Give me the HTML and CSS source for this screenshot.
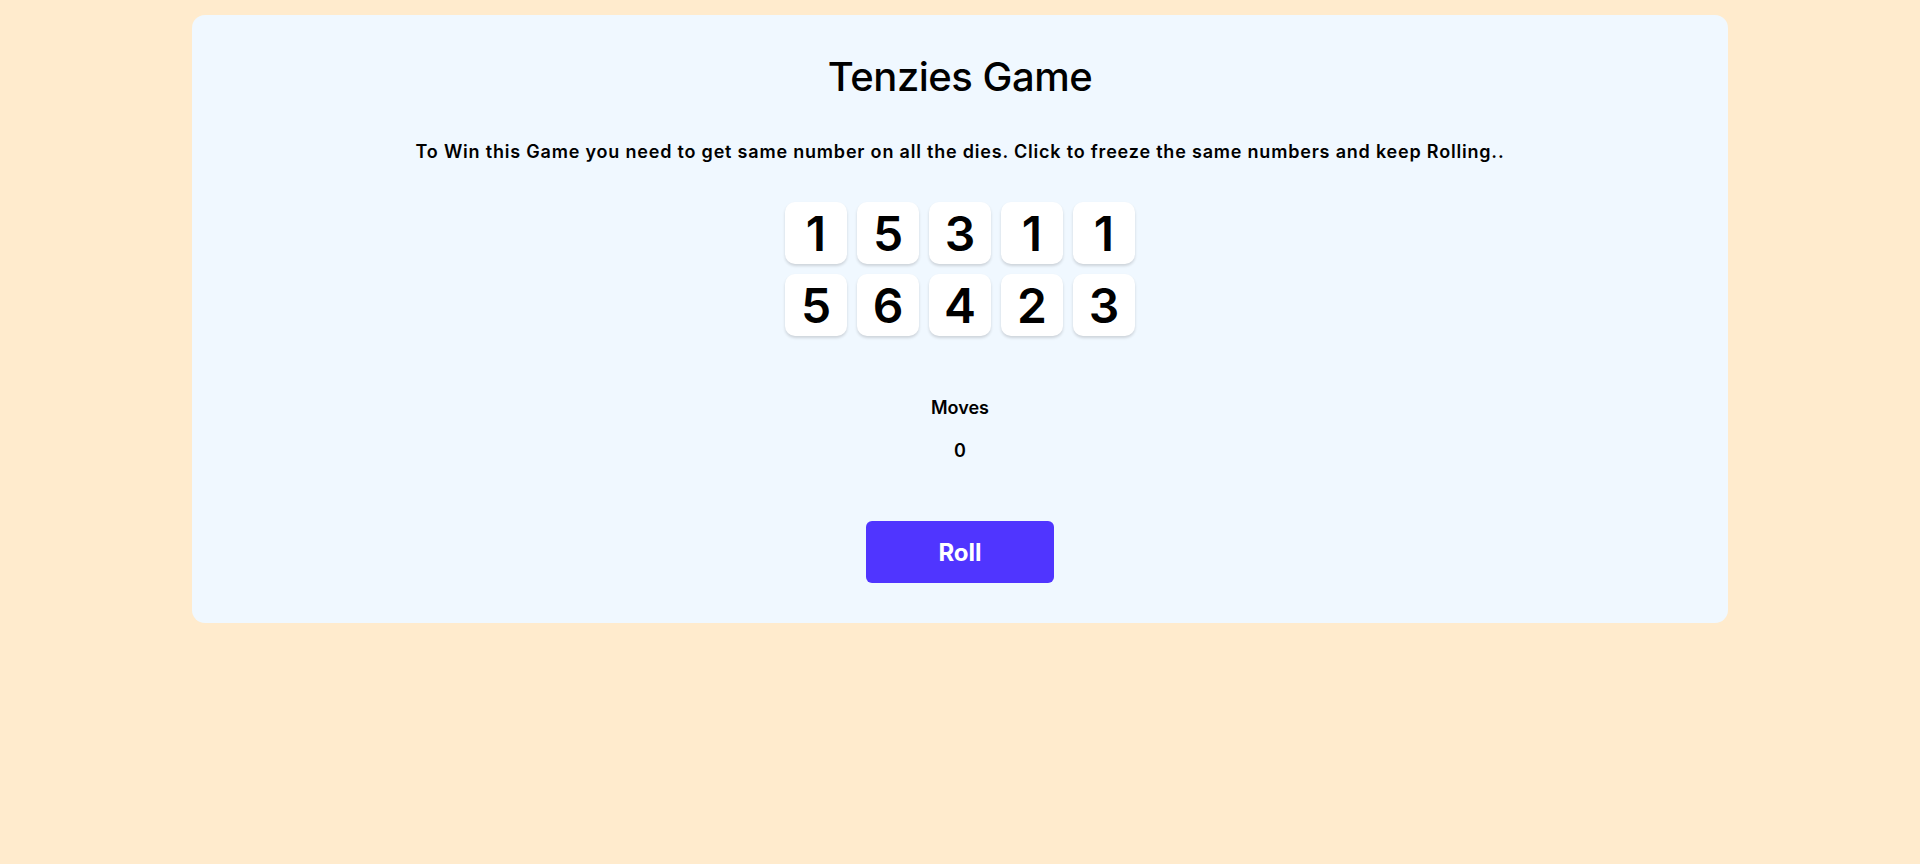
FILE: index.html
```html
<!DOCTYPE html>
<html lang="en">
<head>
<meta charset="utf-8">
<title>Tenzies Game</title>
<link rel="stylesheet" href="styles.css">
</head>
<body>
<main class="card">
  <h1 class="title">Tenzies Game</h1>
  <p class="intro">To Win this Game you need to get same number on all the dies. Click to freeze the same numbers and keep Rolling..</p>
  <div class="dice">
    <button class="die">1</button>
    <button class="die">5</button>
    <button class="die">3</button>
    <button class="die">1</button>
    <button class="die">1</button>
    <button class="die">5</button>
    <button class="die">6</button>
    <button class="die">4</button>
    <button class="die">2</button>
    <button class="die">3</button>
  </div>
  <div class="moves">
    <p class="moves-label">Moves</p>
    <p class="moves-count">0</p>
  </div>
  <button class="roll">Roll</button>
</main>
</body>
</html>
```

FILE: styles.css
```css
* { box-sizing: border-box; }

body {
  margin: 0;
  background: #FFEBCD;
  font-family: "Inter", "Liberation Sans", sans-serif;
  color: #000;
}

.card {
  width: 1536px;
  margin: 15px auto 0;
  background: #F0F8FF;
  border-radius: 13px;
  padding: 38px 0 40px;
  display: flex;
  flex-direction: column;
  align-items: center;
}

.title {
  margin: 0;
  font-size: 40px;
  line-height: 48px;
  font-weight: 550;
  letter-spacing: -0.5px;
}

.intro {
  margin: 39px 0 0;
  font-size: 18px;
  line-height: 24px;
  font-weight: 600;
  letter-spacing: 0.8px;
}

.dice {
  margin-top: 38px;
  display: grid;
  grid-template-columns: repeat(5, 62px);
  grid-auto-rows: 62px;
  gap: 10px;
}

.die {
  border: none;
  background: #fff;
  border-radius: 10px;
  box-shadow: 0 2px 3px rgba(0, 0, 0, 0.15);
  font-family: inherit;
  font-size: 48px;
  font-weight: 600;
  color: #000;
  padding: 0;
  display: flex;
  align-items: center;
  justify-content: center;
}

.moves {
  margin-top: 60px;
  display: flex;
  flex-direction: column;
  align-items: center;
  gap: 19px;
}

.moves p {
  margin: 0;
  font-size: 18px;
  line-height: 24px;
  font-weight: 600;
}

.roll {
  margin-top: 58px;
  width: 188px;
  height: 62px;
  border: none;
  border-radius: 6px;
  background: #5035FF;
  color: #fff;
  font-family: inherit;
  font-size: 24px;
  font-weight: 700;
}
```
